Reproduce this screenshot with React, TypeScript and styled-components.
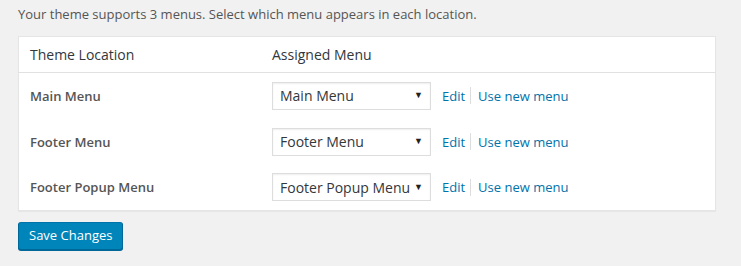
import React from "react";
import styled, { createGlobalStyle } from "styled-components";

const GlobalStyle = createGlobalStyle`
  body {
    margin: 0;
    background: #f1f1f1;
    font-family: "Open Sans", "Liberation Sans", sans-serif;
    font-size: 13px;
    color: #444;
  }
`;

const Page = styled.div`
  padding: 5px 25px 16px 18px;
`;

const Intro = styled.p`
  margin: 0 0 12px;
  line-height: 19px;
  color: #555;
`;

const Table = styled.table`
  width: 698px;
  border-collapse: collapse;
  background: #fff;
  border: 1px solid #e5e5e5;
  box-shadow: 0 1px 1px rgba(0, 0, 0, 0.04);
`;

const HeadCell = styled.th<{ $pad: number }>`
  text-align: left;
  font-weight: 400;
  color: #32373c;
  font-size: 14px;
  height: 35px;
  padding: 0 0 0 ${(p) => p.$pad}px;
  border-bottom: 1px solid #e1e1e1;
`;

const Row = styled.tr`
  height: 46px;
`;

const Label = styled.td`
  width: 242px;
  padding: 0 0 0 11px;
  font-weight: 600;
  color: #555;
`;

const Cell = styled.td`
  padding: 0;
`;

const Controls = styled.div`
  display: flex;
  align-items: center;
`;

const SelectBox = styled.div`
  box-sizing: border-box;
  width: 159px;
  height: 28px;
  border: 1px solid #ddd;
  box-shadow: inset 0 1px 2px rgba(0, 0, 0, 0.07);
  display: flex;
  align-items: center;
  justify-content: space-between;
  padding: 0 7px 0 7px;
  color: #32373c;
  font-size: 14px;
  background: #fff;
`;

const Arrow = styled.span`
  font-size: 9px;
  color: #222;
  margin-top: -2px;
`;

const Links = styled.div`
  display: flex;
  align-items: center;
  margin-left: 11px;
`;

const Link = styled.a`
  color: #0073aa;
  text-decoration: none;
  cursor: pointer;
`;

const Divider = styled.span`
  width: 1px;
  height: 17px;
  background: #ddd;
  margin: 0 7px 0 5px;
`;

const SaveButton = styled.button`
  margin-top: 11px;
  height: 28px;
  padding: 0 10px 2px;
  background: #0085ba;
  border: 1px solid;
  border-color: #0073aa #006799 #006799;
  border-radius: 3px;
  box-shadow: 0 1px 0 #006799;
  color: #fff;
  font-family: "Open Sans", "Liberation Sans", sans-serif;
  font-size: 13px;
  cursor: pointer;
`;

const locations = [
  { label: "Main Menu", menu: "Main Menu" },
  { label: "Footer Menu", menu: "Footer Menu" },
  { label: "Footer Popup Menu", menu: "Footer Popup Menu" },
];

export default function App() {
  return (
    <>
      <GlobalStyle />
      <Page>
        <Intro>Your theme supports 3 menus. Select which menu appears in each location.</Intro>
        <Table>
          <thead>
            <tr>
              <HeadCell $pad={11}>Theme Location</HeadCell>
              <HeadCell $pad={0}>Assigned Menu</HeadCell>
            </tr>
          </thead>
          <tbody>
            {locations.map((loc) => (
              <Row key={loc.label}>
                <Label>{loc.label}</Label>
                <Cell>
                  <Controls>
                    <SelectBox>
                      <span>{loc.menu}</span>
                      <Arrow>▼</Arrow>
                    </SelectBox>
                    <Links>
                      <Link>Edit</Link>
                      <Divider />
                      <Link>Use new menu</Link>
                    </Links>
                  </Controls>
                </Cell>
              </Row>
            ))}
          </tbody>
        </Table>
        <SaveButton>Save Changes</SaveButton>
      </Page>
    </>
  );
}
